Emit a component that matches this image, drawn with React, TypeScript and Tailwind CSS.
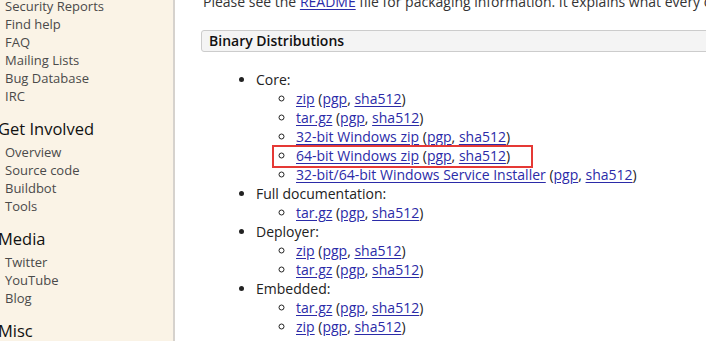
import React from "react";

const font = { fontFamily: '"Open Sans", "Liberation Sans", sans-serif' };

function Link({ children }: { children: React.ReactNode }) {
  return <a className="text-[#2b2ba8] underline underline-offset-2">{children}</a>;
}

function Files({ name }: { name: string }) {
  return (
    <>
      <Link>{name}</Link> (<Link>pgp</Link>, <Link>sha512</Link>)
    </>
  );
}

const sections = [
  { title: "Get Involved", links: ["Overview", "Source code", "Buildbot", "Tools"] },
  { title: "Media", links: ["Twitter", "YouTube", "Blog"] },
  { title: "Misc", links: [] as string[] },
];

function Sidebar() {
  return (
    <aside className="w-[175px] shrink-0 bg-[#faf3e6] border-r-2 border-[#d6d2cd] overflow-hidden">
      <div className="-mt-[3px] text-[13px] leading-[18px] text-[#4a4a4a]">
        {["Security Reports", "Find help", "FAQ", "Mailing Lists", "Bug Database", "IRC"].map((l) => (
          <div key={l} className="pl-[5px]">{l}</div>
        ))}
        {sections.map((s) => (
          <div key={s.title}>
            <div className="-ml-[2px] mt-[12px] text-[16.5px] leading-[24px] text-[#111]">{s.title}</div>
            <div className="mt-[2px]">
              {s.links.map((l) => (
                <div key={l} className="pl-[5px]">{l}</div>
              ))}
            </div>
          </div>
        ))}
      </div>
    </aside>
  );
}

function Main() {
  return (
    <main className="flex-1 pl-[26px] overflow-hidden text-[14px] text-[#222]">
      <p className="-mt-[8px] pl-[2px] leading-[20px] whitespace-nowrap text-[#333]">
        Please see the <Link>README</Link> file for packaging information. It explains what every one of
      </p>
      <div className="mt-[18px] -mr-4 h-[22px] rounded-[3px] border border-[#cccccc] bg-[#f4f4f4] pl-[7px] leading-[20px] font-semibold text-[#111]">
        Binary Distributions
      </div>
      <ul className="mt-[18px] pl-[55px] list-disc leading-[19px] whitespace-nowrap">
        <li>
          Core:
          <ul className="list-[circle] pl-[40px]">
            <li><Files name="zip" /></li>
            <li><Files name="tar.gz" /></li>
            <li><Files name="32-bit Windows zip" /></li>
            <li className="relative">
              <span className="absolute -left-[24px] -top-[1px] h-[23px] w-[261px] border-2 border-[#e53935]" />
              <Files name="64-bit Windows zip" />
            </li>
            <li><Files name="32-bit/64-bit Windows Service Installer" /></li>
          </ul>
        </li>
        <li>
          Full documentation:
          <ul className="list-[circle] pl-[40px]">
            <li><Files name="tar.gz" /></li>
          </ul>
        </li>
        <li>
          Deployer:
          <ul className="list-[circle] pl-[40px]">
            <li><Files name="zip" /></li>
            <li><Files name="tar.gz" /></li>
          </ul>
        </li>
        <li>
          Embedded:
          <ul className="list-[circle] pl-[40px]">
            <li><Files name="tar.gz" /></li>
            <li><Files name="zip" /></li>
          </ul>
        </li>
      </ul>
    </main>
  );
}

export default function App() {
  return (
    <div className="flex h-[341px] w-[706px] overflow-hidden bg-white" style={font}>
      <Sidebar />
      <Main />
    </div>
  );
}
